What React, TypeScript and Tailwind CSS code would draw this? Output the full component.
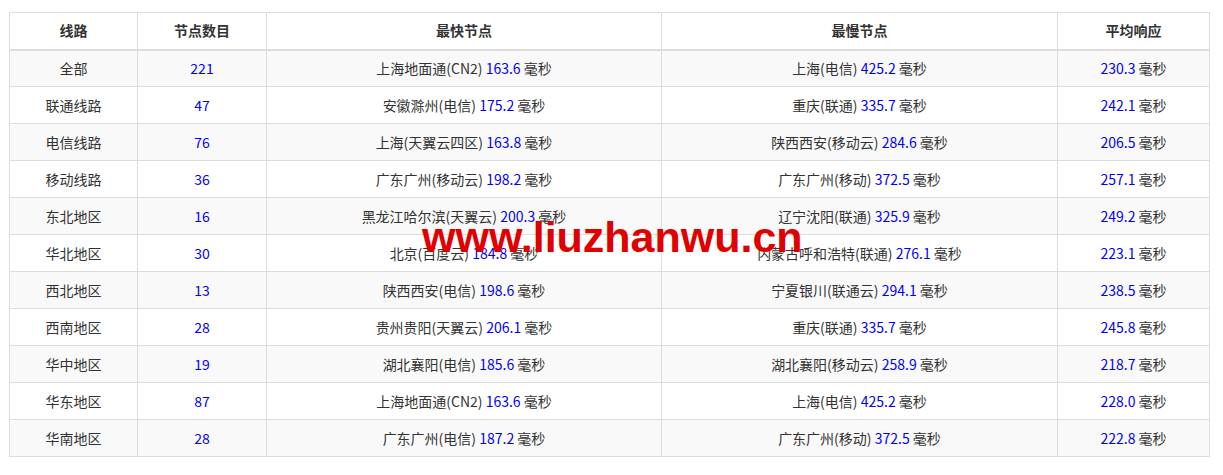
const rows: [string, string, string, string, string, string, string][] = [
  ["全部", "221", "上海地面通(CN2)", "163.6", "上海(电信)", "425.2", "230.3"],
  ["联通线路", "47", "安徽滁州(电信)", "175.2", "重庆(联通)", "335.7", "242.1"],
  ["电信线路", "76", "上海(天翼云四区)", "163.8", "陕西西安(移动云)", "284.6", "206.5"],
  ["移动线路", "36", "广东广州(移动云)", "198.2", "广东广州(移动)", "372.5", "257.1"],
  ["东北地区", "16", "黑龙江哈尔滨(天翼云)", "200.3", "辽宁沈阳(联通)", "325.9", "249.2"],
  ["华北地区", "30", "北京(百度云)", "184.8", "内蒙古呼和浩特(联通)", "276.1", "223.1"],
  ["西北地区", "13", "陕西西安(电信)", "198.6", "宁夏银川(联通云)", "294.1", "238.5"],
  ["西南地区", "28", "贵州贵阳(天翼云)", "206.1", "重庆(联通)", "335.7", "245.8"],
  ["华中地区", "19", "湖北襄阳(电信)", "185.6", "湖北襄阳(移动云)", "258.9", "218.7"],
  ["华东地区", "87", "上海地面通(CN2)", "163.6", "上海(电信)", "425.2", "228.0"],
  ["华南地区", "28", "广东广州(电信)", "187.2", "广东广州(移动)", "372.5", "222.8"],
];

function Ms({ v }: { v: string }) {
  return (
    <>
      <span className="text-[#0000ff]">{v}</span> 毫秒
    </>
  );
}

export default function App() {
  return (
    <div
      className="relative h-[475px] w-[1223px] bg-white pl-[9px] pt-[12px] text-[14px] text-[#333]"
      style={{ fontFamily: '"Microsoft YaHei", "Noto Sans CJK SC", sans-serif' }}
    >
      <table className="w-[1200px] table-fixed border-collapse border border-[#ddd] text-center">
        <colgroup>
          <col className="w-[128px]" />
          <col className="w-[129px]" />
          <col className="w-[395px]" />
          <col className="w-[396px]" />
          <col className="w-[152px]" />
        </colgroup>
        <thead>
          <tr className="h-[37px] border-b-2 border-[#ddd]">
            {["线路", "节点数目", "最快节点", "最慢节点", "平均响应"].map((h) => (
              <th key={h} className="border border-[#ddd] font-bold">
                {h}
              </th>
            ))}
          </tr>
        </thead>
        <tbody>
          {rows.map((r, i) => (
            <tr key={r[0]} className={`h-[37px] ${i % 2 === 0 ? "bg-[#f9f9f9]" : "bg-white"}`}>
              <td className="border border-[#ddd]">{r[0]}</td>
              <td className="border border-[#ddd] text-[#0000ff]">{r[1]}</td>
              <td className="border border-[#ddd]">
                {r[2]} <Ms v={r[3]} />
              </td>
              <td className="border border-[#ddd]">
                {r[4]} <Ms v={r[5]} />
              </td>
              <td className="border border-[#ddd]">
                <Ms v={r[6]} />
              </td>
            </tr>
          ))}
        </tbody>
      </table>
      <div
        className="absolute left-[422px] top-[216px] text-[43px] font-bold leading-none text-[#e00000]"
        style={{ fontFamily: '"Liberation Sans", Arial, sans-serif' }}
      >
        www.liuzhanwu.cn
      </div>
    </div>
  );
}
